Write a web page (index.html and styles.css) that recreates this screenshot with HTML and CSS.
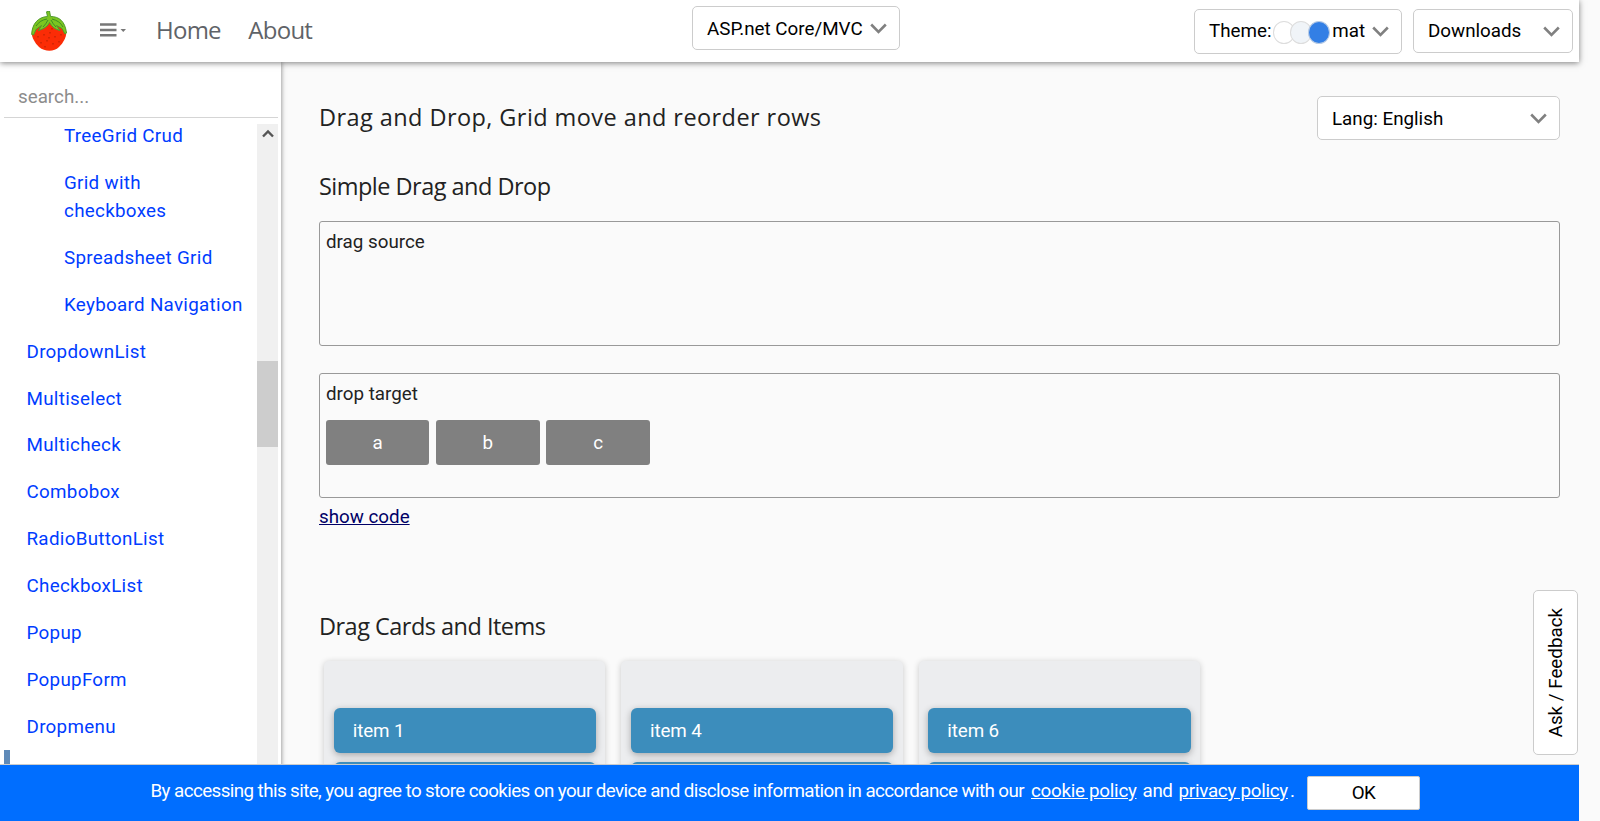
FILE: index.html
```html
<!DOCTYPE html>
<html lang="en">
<head>
<meta charset="utf-8">
<title>Drag and Drop, Grid move and reorder rows</title>
<link rel="stylesheet" href="styles.css">
</head>
<body>
<header class="topbar">
  <svg class="logo" viewBox="0 0 36 40">
    <path d="M1 20C0 25 3 31 8 36C14 41 23 41 28 36C33 31 36 25 35 20C33 11 28 8 18 8S3 11 1 20Z" fill="#fb2c06"/>
    <path d="M15.500.8L18.500 0 19.500 5.500C28 5.500 34 10 35.500 22L34 23 31 17.500 25.500 14.500 29 19.500C24 18.500 21 16 18.500 11.500 17 15 13 18 7.500 19.500L10.500 14.500 5 18.500 2.500 24 .7 23.500C1 13 7 6 16.500 5.500Z" fill="#7cc520" stroke="#4f9a2c" stroke-width="1" stroke-linejoin="round"/>
    <path d="M5 15Q9 9 16 8M21 8Q29 10 32 16M17 9Q15 13 12 16M20 9Q22 13 25 16" fill="none" stroke="#3f8d25" stroke-width="1"/>
    <path d="M7 25v1.500M13 23v1.500M19 21v1.500M24 25v1.500M30 23v1.500M10 31v1.500M16 29v1.500M22 32v1.500M28 30v1.500M18 26v1.500M14 35v1.500M21 17v1.500" stroke="#b52305" stroke-width="1.100"/>
  </svg>
  <svg class="menu-icon" viewBox="0 0 27 14">
    <path d="M0 1.500h16.500M0 7h16.500M0 12.300h16.500" stroke="#777" stroke-width="2.600"/>
    <path d="M20.500 6h5.500l-2.750 3z" fill="#777"/>
  </svg>
  <nav class="nav"><a class="nav-link">Home</a><a class="nav-link">About</a></nav>
  <div class="select select-stack"><span class="lower">ASP.net Core/MVC</span><svg class="chev" viewBox="0 0 17 11"><path d="M1.200 1.500L8.500 8.800 15.800 1.500"/></svg></div>
  <div class="select select-theme"><span>Theme:</span><span class="swatches"><i class="dot dot-white"></i><i class="dot dot-grey"></i><i class="dot dot-blue"></i></span><span class="theme-name">mat</span><svg class="chev" viewBox="0 0 17 11"><path d="M1.200 1.500L8.500 8.800 15.800 1.500"/></svg></div>
  <div class="select select-down"><span>Downloads</span><svg class="chev" viewBox="0 0 17 11"><path d="M1.200 1.500L8.500 8.800 15.800 1.500"/></svg></div>
</header>
<div class="layout">
  <aside class="sidebar">
    <div class="search">search...</div>
    <div class="tree">
      <ul class="menu">
        <li class="sub">TreeGrid Crud</li>
        <li class="sub">Grid with<br>checkboxes</li>
        <li class="sub">Spreadsheet Grid</li>
        <li class="sub">Keyboard Navigation</li>
        <li>DropdownList</li>
        <li>Multiselect</li>
        <li>Multicheck</li>
        <li>Combobox</li>
        <li>RadioButtonList</li>
        <li>CheckboxList</li>
        <li>Popup</li>
        <li>PopupForm</li>
        <li>Dropmenu</li>
        <li class="active"></li>
      </ul>
      <div class="scroll">
        <svg class="scroll-up" viewBox="0 0 12 9"><path d="M1 7.500L6 2.500 11 7.500"/></svg>
        <div class="thumb"></div>
      </div>
    </div>
  </aside>
  <main class="content">
    <div class="title-row">
      <h1 class="title">Drag and Drop, Grid move and reorder rows</h1>
      <div class="select select-lang"><span class="lower">Lang: English</span><svg class="chev" viewBox="0 0 17 11"><path d="M1.200 1.500L8.500 8.800 15.800 1.500"/></svg></div>
    </div>
    <h2 class="heading">Simple Drag and Drop</h2>
    <section class="box">drag source</section>
    <section class="box">drop target
      <div class="chips"><div class="chip">a</div><div class="chip">b</div><div class="chip">c</div></div>
    </section>
    <a class="show-code">show code</a>
    <h2 class="heading heading-cards">Drag Cards and Items</h2>
    <div class="cards">
      <div class="card"><div class="item">item 1</div><div class="item"></div></div>
      <div class="card"><div class="item">item 4</div><div class="item"></div></div>
      <div class="card"><div class="item">item 6</div><div class="item"></div></div>
    </div>
  </main>
</div>
<div class="feedback"><span class="feedback-text">Ask / Feedback</span></div>
<div class="cookies">
  <span class="cookie-text">By accessing this site, you agree to store cookies on your device and disclose information in accordance with our</span>
  <a class="policy">cookie policy</a><span class="and">and</span><a class="policy">privacy policy</a><span class="dotend">.</span>
  <button class="ok">OK</button>
</div>
</body>
</html>
```
FILE: styles.css
```css
* { box-sizing: border-box; }
html { font-size: 18.8px; overflow: hidden; }
body {
  margin: 0;
  height: 821px;
  overflow: hidden;
  background: #fafafa;
  color: #222;
  font-family: Roboto, sans-serif;
  line-height: 1.5;
}
.topbar {
  position: relative;
  z-index: 2;
  display: flex;
  align-items: flex-start;
  width: 1579px;
  height: 62px;
  background: #fff;
  box-shadow: 0 1px 6px rgba(0,0,0,.5);
}
.logo { width: 36px; height: 40px; margin: 11px 0 0 31px; }
.menu-icon { width: 27px; height: 14px; margin: 23px 0 0 33px; }
.nav { display: flex; gap: 27px; width: 536px; margin: 12px 0 0 29px; }
.nav-link {
  font: 24px/36px "Open Sans", sans-serif;
  letter-spacing: -.75px;
  color: #5f6368;
}
.nav-link + .nav-link { margin-left: .5px; }
.select {
  display: flex;
  align-items: center;
  flex: none;
  height: 44px;
  padding: 0 12px 0 14px;
  border: 1px solid #ccc;
  border-radius: 5px;
  background: #fff;
  color: #000;
  white-space: nowrap;
}
.lower { padding-top: 2px; }
.chev {
  width: 17px;
  height: 11px;
  margin-left: auto;
  fill: none;
  stroke: #808080;
  stroke-width: 2.600;
}
.select-stack { width: 208px; margin-top: 6px; }
.select-theme { width: 208px; height: 45px; margin: 9px 0 0 294px; }
.select-down { width: 160px; margin: 9px 0 0 11px; }
.select-lang { width: 243px; }
.swatches { display: flex; margin: 1px 0 0 1px; }
.dot { width: 22px; height: 23px; border: 1px solid #ddd; border-radius: 50%; margin-right: -4.200px; }
.dot-white { background: #fff; }
.dot-grey { background: #f0f4f8; }
.dot-blue { background: #337fe5; border-color: #b9cce5; }
.theme-name { margin-left: 6.400px; }
.layout { display: flex; height: 759px; overflow: hidden; }
.sidebar {
  display: flex;
  flex-direction: column;
  flex: none;
  width: 281px;
  padding: 0 3px 0 4px;
  background: #fff;
  box-shadow: 0 0 5px rgba(0,0,0,.5);
}
.search {
  height: 56px;
  padding: 21px 0 0 14px;
  border-bottom: 1px solid #d5d5d5;
  color: #8c8c8c;
}
.tree { display: flex; flex: 1; margin-top: 6px; overflow: hidden; }
.menu {
  flex: 1;
  margin: -11.500px 0 0;
  padding: 0;
  list-style: none;
  color: #003cff;
  letter-spacing: .3px;
}
.menu li { padding: 9.360px 0 9.360px 22.500px; white-space: nowrap; }
.menu .sub { padding-left: 60px; }
.menu .active { height: 47px; border-left: 6px solid #5f8ab8; }
.scroll { width: 21px; background: #f0f0f0; }
.scroll-up { display: block; width: 12px; height: 9px; margin: 5px 0 0 4.500px; fill: none; stroke: #555; stroke-width: 2.400; }
.thumb { height: 86px; margin-top: 223px; background: #cdcdcd; }
.content { width: 1241px; margin-left: 38px; padding-top: 34px; }
.title-row { display: flex; justify-content: space-between; }
.title, .heading { margin: 0; font-family: "Open Sans", sans-serif; font-weight: 400; font-size: 23.500px; line-height: 36px; }
.title { padding-top: 3px; letter-spacing: .43px; }
.heading { margin: 28px 0 17px; letter-spacing: -.52px; }
.box {
  height: 125px;
  margin-bottom: 27px;
  padding: 6px;
  border: 1px solid #999;
  border-radius: 3px;
}
.chips { display: flex; gap: 6.800px; margin-top: 12px; }
.chip {
  width: 103.400px;
  height: 45px;
  padding-top: 1px;
  border-radius: 3px;
  background: #808080;
  color: #fff;
  line-height: 45px;
  text-align: center;
}
.show-code { display: block; margin-top: -22px; color: #006; text-decoration: underline; }
.heading-cards { margin: 77px 0 17px; }
.cards { display: flex; gap: 16px; margin-left: 5px; }
.card {
  width: 281.300px;
  height: 300px;
  padding: 47px 9.300px 10px 9.700px;
  border-radius: 5px;
  background: #ecedef;
  box-shadow: 0 1px 6px rgba(0,0,0,.2);
}
.item {
  height: 45px;
  margin-bottom: 9px;
  padding: 1px 0 0 19px;
  border-radius: 6px;
  background: #3c8dbc;
  box-shadow: 0 2px 7px rgba(0,0,0,.3);
  color: #fff;
  letter-spacing: -.1px;
  line-height: 45px;
}
.feedback {
  position: absolute;
  left: 1533px;
  top: 590px;
  display: flex;
  align-items: center;
  justify-content: center;
  width: 45px;
  height: 165px;
  padding-left: 1px;
  border: 1px solid #ccc;
  border-radius: 5px;
  background: #fff;
  color: #000;
}
.feedback-text { writing-mode: vertical-rl; transform: rotate(180deg); white-space: nowrap; }
.cookies {
  position: absolute;
  left: 0;
  bottom: 0;
  z-index: 3;
  display: flex;
  width: 1579px;
  height: 57px;
  padding: 12px 0 0 150.500px;
  border-top: 1px solid #ccc;
  background: #006eff;
  color: #fff;
  white-space: nowrap;
}
.policy { letter-spacing: -.27px; text-decoration: underline; }
.cookie-text { width: 880.500px; letter-spacing: -.58px; }
.and { margin: 0 6px; letter-spacing: -.4px; }
.dotend { width: 5px; margin-left: 2px; }
.ok {
  width: 113px;
  height: 34px;
  margin: -1px 0 0 12px;
  padding: 0;
  border: 1px solid #ccc;
  border-radius: 2px;
  background: #fff;
  color: #000;
  font: 18.8px Roboto, sans-serif;
  letter-spacing: -.6px;
}
```
